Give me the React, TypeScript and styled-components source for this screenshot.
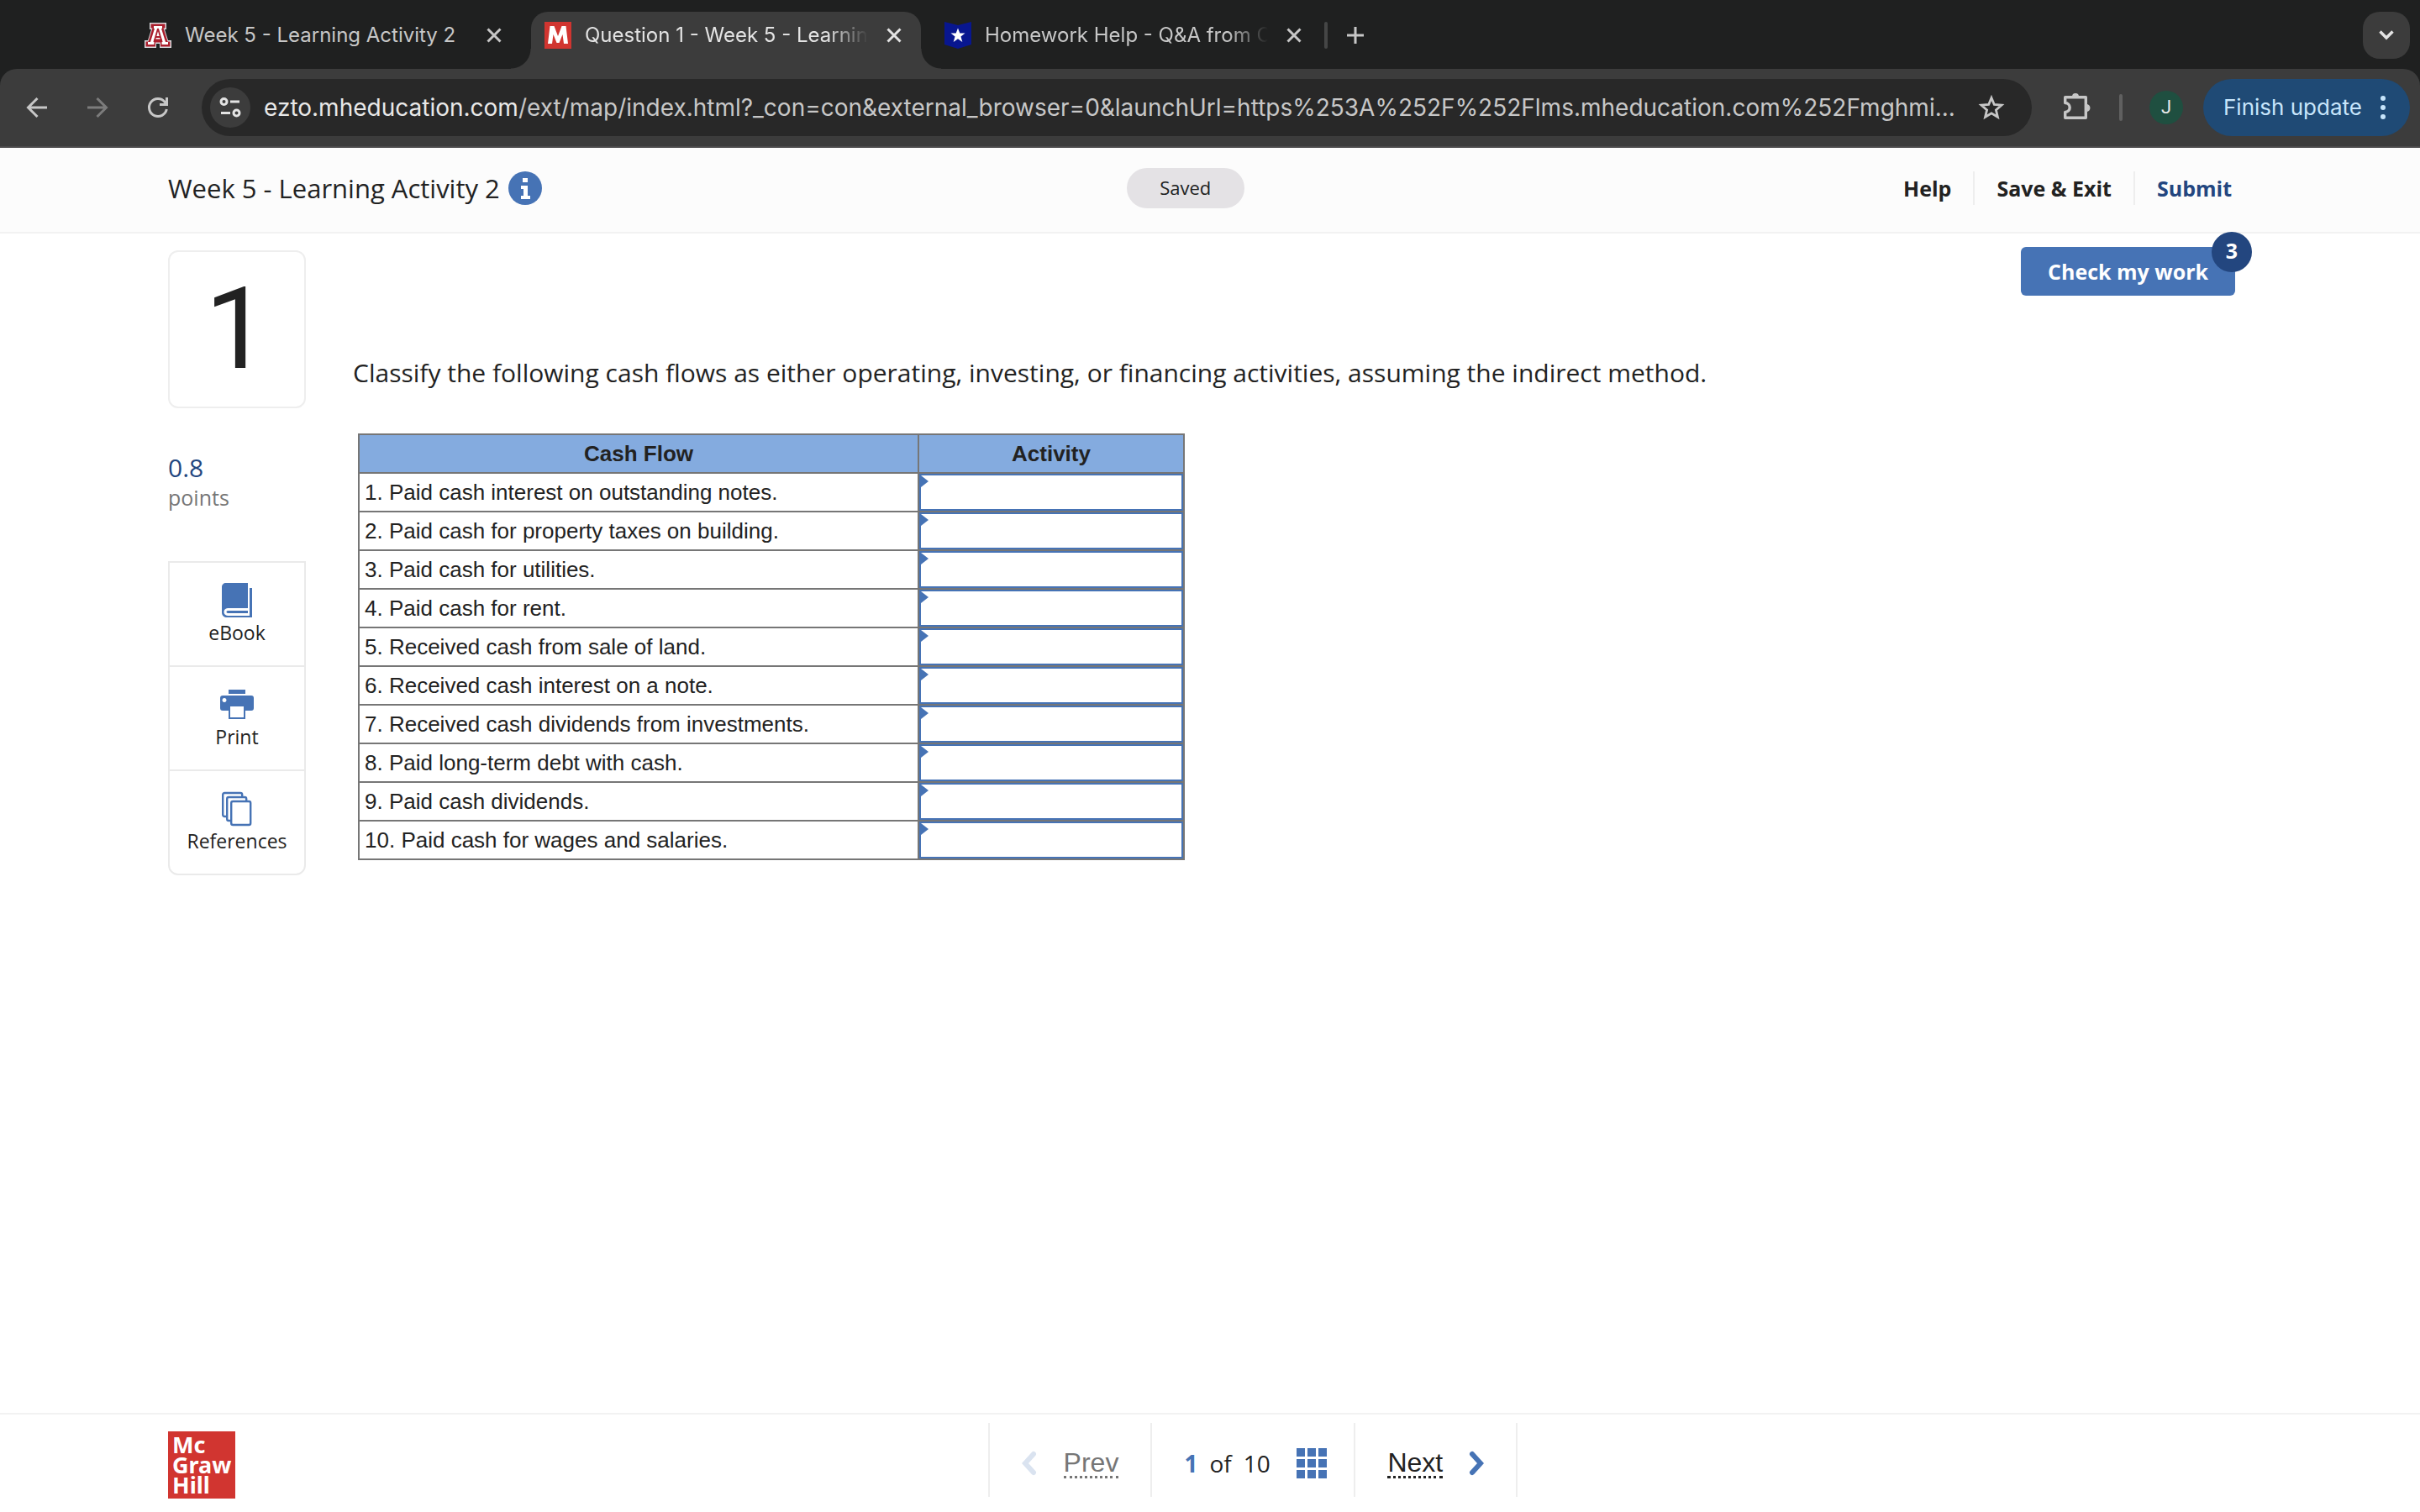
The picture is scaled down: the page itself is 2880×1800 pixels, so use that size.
import React from "react";
import styled, { createGlobalStyle, css } from "styled-components";

const ui = `Inter, "Noto Sans", sans-serif`;
const brand = `"Open Sans", "Noto Sans", sans-serif`;
const tableFont = `"Liberation Sans", Arial, sans-serif`;

const colors = {
  ink: "#222",
  muted: "#767676",
  line: "#eee",
  blue: "#4673b5",
  navy: "#23467f",
  strip: "#1f2020",
  bar: "#3c3c3c",
  icon: "#c7c7c7",
};

const GlobalStyle = createGlobalStyle`
  *, *::before, *::after { box-sizing: border-box; }
  body { margin: 0; background: #fff; color: ${colors.ink}; font-family: ${brand}; }
  button { border: 0; padding: 0; background: none; color: inherit; font: inherit; cursor: pointer; }
  svg { display: block; flex: none; }
`;

const Page = styled.div`
  display: flex;
  flex-direction: column;
  min-height: 100vh;
`;

/* Browser chrome */

const TabStrip = styled.div`
  display: flex;
  justify-content: space-between;
  height: 82px;
  padding: 14px 12px 0 156px;
  background: ${colors.strip};
  font: 24px/36px ${ui};
  color: ${colors.icon};
`;

const TabList = styled.div`
  display: flex;
`;

const Tab = styled.div<{ $active?: boolean }>`
  position: relative;
  display: flex;
  align-items: center;
  gap: 16px;
  width: 468px;
  height: 56px;
  padding: 0 27px 0 16px;
  ${(p) =>
    p.$active &&
    css`
      width: 464px;
      height: 68px;
      padding: 0 23px 12px 16px;
      margin: 0 12px 0 8px;
      border-radius: 20px 20px 0 0;
      background: ${colors.bar};
      color: #e3e3e3;
      &::before,
      &::after {
        content: "";
        position: absolute;
        bottom: 0;
        width: 24px;
        height: 24px;
      }
      &::before {
        right: 100%;
        background: radial-gradient(circle at 0 0, transparent 23px, ${colors.bar} 24px);
      }
      &::after {
        left: 100%;
        background: radial-gradient(circle at 100% 0, transparent 23px, ${colors.bar} 24px);
      }
    `}
`;

const TabTitle = styled.span<{ $fade?: boolean }>`
  flex: 1;
  min-width: 0;
  overflow: hidden;
  white-space: nowrap;
  ${(p) => p.$fade && css`mask-image: linear-gradient(to right, #000 calc(100% - 48px), transparent);`}
`;

const TabClose = styled.button`
  margin-left: 6px;
`;

const StripDivider = styled.span`
  width: 4px;
  height: 32px;
  margin: 12px 22px 0 0;
  border-radius: 2px;
  background: #454646;
`;

const NewTab = styled.button`
  height: 56px;
`;

const TabSearch = styled.button`
  display: grid;
  place-items: center;
  width: 56px;
  height: 56px;
  border-radius: 20px;
  background: ${colors.bar};
  color: #e3e3e3;
`;

const ToolbarBack = styled.div`
  background: ${colors.strip};
`;

const Toolbar = styled.div`
  display: flex;
  align-items: center;
  height: 94px;
  padding: 0 12px 0 28px;
  border-bottom: 2px solid #4b4a4b;
  border-radius: 20px 20px 0 0;
  background: ${colors.bar};
  color: ${colors.icon};
`;

const NavIcons = styled.div`
  display: flex;
  gap: 40px;
  margin-right: 36px;
`;

const NavIcon = styled.button<{ $dim?: boolean }>`
  color: ${(p) => (p.$dim ? "#7c7c7c" : colors.icon)};
`;

const Omnibox = styled.div`
  display: flex;
  flex: 1;
  align-items: center;
  min-width: 0;
  height: 68px;
  padding: 0 32px 0 10px;
  border-radius: 34px;
  background: #282828;
`;

const SiteInfo = styled.button`
  display: grid;
  flex: none;
  place-items: center;
  width: 48px;
  height: 48px;
  border-radius: 24px;
  background: ${colors.bar};
`;

const Url = styled.span`
  flex: 1;
  min-width: 0;
  margin: 0 12px 0 16px;
  overflow: hidden;
  white-space: nowrap;
  text-overflow: ellipsis;
  font: 28px/40px ${ui};
  color: ${colors.icon};
  strong {
    font-weight: 400;
    color: #e8e8e8;
  }
`;

const Extensions = styled.button`
  margin: 0 32px 0 36px;
`;

const BarDivider = styled.span`
  width: 4px;
  height: 32px;
  border-radius: 2px;
  background: #606060;
`;

const Avatar = styled.button`
  width: 40px;
  height: 40px;
  margin: 0 24px 0 32px;
  border-radius: 20px;
  background: #1f4f40;
  color: #e8e8e8;
  font: 22px/40px Roboto, sans-serif;
`;

const UpdateButton = styled.button`
  display: flex;
  align-items: center;
  justify-content: space-between;
  width: 246px;
  height: 68px;
  padding: 0 29px 0 24px;
  border-radius: 34px;
  background: #1f4a75;
  color: #c7e5fb;
  font: 26px/36px ${ui};
  white-space: nowrap;
`;

/* Assignment header */

const Header = styled.header`
  display: grid;
  grid-template-columns: 33fr auto 34fr;
  align-items: center;
  height: 102px;
  padding: 0 224px 4px 200px;
  border-bottom: 2px solid #f2f2f2;
  background: #fcfcfc;
`;

const TitleGroup = styled.div`
  display: flex;
  align-items: center;
  gap: 10px;
`;

const Title = styled.h1`
  margin: 0;
  font-size: 31px;
  font-weight: 400;
  line-height: 44px;
`;

const SavedPill = styled.span`
  width: 140px;
  height: 48px;
  border-radius: 24px;
  background: #e4e2e5;
  font-size: 22px;
  line-height: 46px;
  text-align: center;
`;

const Actions = styled.nav`
  display: flex;
  justify-content: flex-end;
`;

const Action = styled.button<{ $primary?: boolean }>`
  height: 40px;
  padding: 0 26px;
  border-left: 2px solid ${colors.line};
  color: ${(p) => (p.$primary ? colors.navy : colors.ink)};
  font-size: 25px;
  font-weight: 700;
  line-height: 36px;
  &:first-child {
    border-left: 0;
  }
  &:last-child {
    padding-right: 0;
  }
`;

/* Question body */

const Main = styled.main`
  display: flex;
  flex: 1;
  align-items: flex-start;
  gap: 56px;
  padding: 20px 220px 0 200px;
`;

const Sidebar = styled.aside`
  width: 164px;
`;

const QuestionNumber = styled.div`
  display: grid;
  place-items: center;
  height: 188px;
  border: 2px solid ${colors.line};
  border-radius: 12px;
  font: 400 136px/180px Roboto, sans-serif;
`;

const Points = styled.div`
  margin: 52px 0 60px;
  color: ${colors.muted};
  font-size: 25px;
  line-height: 32px;
  strong {
    display: block;
    color: ${colors.navy};
    font-size: 30px;
    font-weight: 400;
    line-height: 38px;
  }
`;

const Tools = styled.div`
  border: 2px solid #eaeaea;
  border-radius: 0 0 12px 12px;
`;

const Tool = styled.button`
  display: flex;
  flex-direction: column;
  align-items: center;
  width: 100%;
  height: 122px;
  padding-top: 24px;
  font-size: 23px;
  line-height: 34px;
  & + & {
    height: 124px;
    border-top: 2px solid #eaeaea;
  }
`;

const Question = styled.section`
  display: flex;
  flex: 1;
  flex-direction: column;
`;

const CheckWork = styled.button`
  position: relative;
  align-self: flex-end;
  height: 58px;
  margin-top: -4px;
  padding: 0 32px;
  border-radius: 6px;
  background: ${colors.blue};
  color: #fff;
  font-size: 25px;
  font-weight: 700;
  line-height: 54px;
`;

const Badge = styled.span`
  position: absolute;
  top: -18px;
  right: -20px;
  width: 48px;
  height: 48px;
  border-radius: 24px;
  background: ${colors.navy};
  line-height: 44px;
`;

const Prompt = styled.p`
  margin: 70px 0 50px;
  font-size: 30px;
  line-height: 44px;
`;

const FlowTable = styled.table`
  width: 984px;
  margin-left: 6px;
  border-collapse: collapse;
  table-layout: fixed;
  font: 26px/30px ${tableFont};
  th,
  td {
    height: 46px;
    padding: 0;
    border: 2px solid ${colors.muted};
  }
  th {
    background: #84abdf;
    font-weight: 700;
  }
  td:first-child {
    padding-left: 6px;
  }
`;

const AnswerCell = styled.td`
  position: relative;
  &::after {
    content: "";
    position: absolute;
    top: 2px;
    left: 2px;
    border: solid transparent;
    border-width: 7px 0 7px 9px;
    border-left-color: ${colors.blue};
    pointer-events: none;
  }
`;

const AnswerSelect = styled.select`
  display: block;
  width: 100%;
  height: 44px;
  border: 2px solid ${colors.blue};
  border-radius: 0;
  background: #fff;
  appearance: none;
  font: inherit;
`;

/* Footer */

const Footer = styled.footer`
  display: grid;
  grid-template-columns: 19fr auto 17fr;
  height: 118px;
  padding: 10px 200px 0;
  border-top: 2px solid #f2f2f2;
`;

const Logo = styled.div`
  width: 80px;
  height: 80px;
  margin-top: 10px;
  padding: 4px 0 0 5px;
  background: #d13530;
  color: #fff;
  font: 700 27px/24px "Noto Sans", sans-serif;
`;

const Pager = styled.nav`
  display: flex;
  height: 88px;
  border-right: 2px solid ${colors.line};
`;

const PagerPart = styled.div<{ $width: number }>`
  display: flex;
  align-items: center;
  justify-content: space-between;
  width: ${(p) => p.$width}px;
  padding: 8px 32px 0;
  border-left: 2px solid ${colors.line};
`;

const PagerLink = styled.a<{ $dim?: boolean }>`
  display: flex;
  flex: 1;
  align-items: center;
  justify-content: space-between;
  padding: 0 6px;
  color: ${(p) => (p.$dim ? colors.muted : colors.ink)};
  font: 32px/32px ${tableFont};
  text-decoration: none;
  span {
    border-bottom: 3px dotted;
  }
`;

const Position = styled.span`
  display: flex;
  gap: 14px;
  margin-left: 6px;
  font-size: 28px;
  line-height: 44px;
  strong {
    color: ${colors.blue};
  }
`;

const CloseIcon = () => (
  <svg width="18" height="18" viewBox="0 0 18 18" stroke="currentColor" strokeWidth="3">
    <path d="M1.5 1.5l15 15M16.5 1.5l-15 15" />
  </svg>
);

const ArizonaIcon = () => (
  <svg width="32" height="32" viewBox="0 0 32 32">
    <path d="M6 1h20v8h-2l4 13h4v9H18v-5h-4v5H0v-9h4L8 9H6z" fill="#d9dde0" />
    <path d="M7.500 2.500h17v5h-2l5 16h3v6H19v-5h-6v5H1.500v-6h3l5-16h-2z" fill="#ab1f2d" />
    <path d="M11 5h10v3h-1l5 16h3v3h-7.500v-3h1l-1-3.500h-9L10.500 24h1v3H4v-3h3l5-16h-1z" fill="#fff" />
    <path d="M16 8l-4.500 15.500M16 8l4.500 15.500M12.500 18h7" stroke="#ab1f2d" strokeWidth="1.800" fill="none" />
  </svg>
);

const McGrawIcon = () => (
  <svg width="32" height="32" viewBox="0 0 32 32">
    <path d="M0 0h32v32H0z" fill="#d13530" />
    <path d="M4 26L6.500 5h5L16 17l4.500-12h5L28 26h-5l-1.500-11L17.500 25h-3l-4-10L9 26z" fill="#fff" />
  </svg>
);

const StarFlagIcon = () => (
  <svg width="32" height="32" viewBox="0 0 32 32">
    <path d="M0 0l16 4L32 0v27l-16 5-16-5z" fill="#08168f" />
    <path d="M16 7.500l2.300 6h6.200l-5 4 1.800 6.500-5.300-3.800-5.300 3.800 1.800-6.500-5-4h6.200z" fill="#fff" />
  </svg>
);

const flows = [
  "Paid cash interest on outstanding notes.",
  "Paid cash for property taxes on building.",
  "Paid cash for utilities.",
  "Paid cash for rent.",
  "Received cash from sale of land.",
  "Received cash interest on a note.",
  "Received cash dividends from investments.",
  "Paid long-term debt with cash.",
  "Paid cash dividends.",
  "Paid cash for wages and salaries.",
];

const tabs = [
  { title: "Week 5 - Learning Activity 2", icon: <ArizonaIcon /> },
  { title: "Question 1 - Week 5 - Learning", icon: <McGrawIcon />, active: true, fade: true },
  { title: "Homework Help - Q&A from C", icon: <StarFlagIcon />, fade: true },
];

const BrowserChrome = () => (
  <div>
    <TabStrip>
      <TabList>
        {tabs.map((t) => (
          <Tab key={t.title} $active={t.active}>
            {t.icon}
            <TabTitle $fade={t.fade}>{t.title}</TabTitle>
            <TabClose aria-label="Close tab">
              <CloseIcon />
            </TabClose>
          </Tab>
        ))}
        <StripDivider />
        <NewTab aria-label="New tab">
          <svg width="22" height="22" viewBox="0 0 22 22" stroke="currentColor" strokeWidth="3">
            <path d="M11 1v20M1 11h20" />
          </svg>
        </NewTab>
      </TabList>
      <TabSearch aria-label="Search tabs">
        <svg width="18" height="12" viewBox="0 0 18 12" fill="none" stroke="currentColor" strokeWidth="3.500">
          <path d="M1.500 1.500L9 9l7.500-7.500" />
        </svg>
      </TabSearch>
    </TabStrip>
    <ToolbarBack>
      <Toolbar>
        <NavIcons>
          <NavIcon aria-label="Back">
            <svg width="32" height="32" viewBox="0 0 32 32" fill="none" stroke="currentColor" strokeWidth="3">
              <path d="M28 16H6M16.500 5L5.500 16l11 11" />
            </svg>
          </NavIcon>
          <NavIcon $dim aria-label="Forward">
            <svg width="32" height="32" viewBox="0 0 32 32" fill="none" stroke="currentColor" strokeWidth="3">
              <path d="M4 16h22M15.500 5l11 11-11 11" />
            </svg>
          </NavIcon>
          <NavIcon aria-label="Reload">
            <svg width="32" height="32" viewBox="0 0 32 32" fill="none" stroke="currentColor" strokeWidth="3">
              <path d="M26.300 18A10.500 10.500 0 1 1 24 9.200l2.500 3M26.500 4v8.500H18" />
            </svg>
          </NavIcon>
        </NavIcons>
        <Omnibox>
          <SiteInfo aria-label="Site information">
            <svg width="26" height="24" viewBox="0 0 26 24" fill="none" stroke="#e3e3e3" strokeWidth="3">
              <circle cx="5.500" cy="5" r="3.500" />
              <path d="M13 5h11M2 18.500h11" />
              <circle cx="20.500" cy="18.500" r="3.500" />
            </svg>
          </SiteInfo>
          <Url>
            <strong>ezto.mheducation.com</strong>
            /ext/map/index.html?_con=con&external_browser=0&launchUrl=https%253A%252F%252Flms.mheducation.com%252Fmghmi...
          </Url>
          <button aria-label="Bookmark">
            <svg width="32" height="32" viewBox="0 0 32 32" fill="none" stroke="currentColor" strokeWidth="2.800">
              <path d="M16 4.500l3.300 8 8.700.7-6.600 5.700 2 8.400L16 22.800l-7.400 4.500 2-8.400L4 13.200l8.700-.7z" />
            </svg>
          </button>
        </Omnibox>
        <Extensions aria-label="Extensions">
          <svg width="36" height="40" viewBox="0 0 36 40" fill="none" stroke="currentColor" strokeWidth="3.400">
            <path d="M3.700 7.700h24.600v24.600H3.700v-6.800a5.500 5.500 0 0 0 0-11z" strokeLinejoin="round" />
            <path d="M12 7a4 4 0 0 1 8 0zM29 16a4.500 4.500 0 0 1 0 9z" fill="currentColor" stroke="none" />
          </svg>
        </Extensions>
        <BarDivider />
        <Avatar aria-label="Profile">J</Avatar>
        <UpdateButton>
          Finish update
          <svg width="6" height="28" viewBox="0 0 6 28" fill="currentColor">
            <circle cx="3" cy="3" r="3" />
            <circle cx="3" cy="14" r="3" />
            <circle cx="3" cy="25" r="3" />
          </svg>
        </UpdateButton>
      </Toolbar>
    </ToolbarBack>
  </div>
);

const EbookIcon = () => (
  <svg width="36" height="42" viewBox="0 0 36 42" fill={colors.blue}>
    <path d="M5 0h26v30H7c-6 0-6 9 0 9h26V6h3v35H6c-3 0-6-2-6-6V5c0-3 2-5 5-5z" />
    <path d="M7 33h24v3H7c-2 0-2-3 0-3z" />
  </svg>
);

const PrintIcon = () => (
  <svg width="40" height="42" viewBox="0 0 40 42" fill={colors.blue}>
    <path d="M10 3h20v5H10z" />
    <path
      fillRule="evenodd"
      d="M3 10h34c2 0 3 1 3 3v12c0 2-1 3-3 3h-7v10H10V28H3c-2 0-3-1-3-3V13c0-2 1-3 3-3zm2 3a2.500 2.500 0 1 0 .01 0zM12 23v13h16V23z"
    />
  </svg>
);

const ReferencesIcon = () => (
  <svg width="36" height="42" viewBox="0 0 36 42" fill="#fff" stroke={colors.blue} strokeWidth="2.400">
    <rect x="1.200" y="2" width="23" height="28" rx="2" />
    <rect x="6.200" y="7" width="23" height="28" rx="2" />
    <rect x="11.200" y="12" width="23" height="28" rx="2" />
  </svg>
);

const GridIcon = () => (
  <svg width="36" height="36" viewBox="0 0 36 36" fill={colors.blue}>
    {[0, 13, 26].map((y) => [0, 13, 26].map((x) => <rect key={`${x}-${y}`} x={x} y={y} width="10" height="10" />))}
  </svg>
);

export default function App() {
  return (
    <Page>
      <GlobalStyle />
      <BrowserChrome />
      <Header>
        <TitleGroup>
          <Title>Week 5 - Learning Activity 2</Title>
          <button aria-label="Assignment information">
            <svg width="40" height="40" viewBox="0 0 40 40">
              <circle cx="20" cy="20" r="20" fill={colors.blue} />
              <path d="M17 8h6v5h-6zM15 17h8v12h3v4H15v-4h3v-8h-3z" fill="#fff" />
            </svg>
          </button>
        </TitleGroup>
        <SavedPill>Saved</SavedPill>
        <Actions>
          <Action>Help</Action>
          <Action>Save &amp; Exit</Action>
          <Action $primary>Submit</Action>
        </Actions>
      </Header>
      <Main>
        <Sidebar>
          <QuestionNumber>1</QuestionNumber>
          <Points>
            <strong>0.8</strong>
            points
          </Points>
          <Tools>
            <Tool>
              <EbookIcon />
              eBook
            </Tool>
            <Tool>
              <PrintIcon />
              Print
            </Tool>
            <Tool>
              <ReferencesIcon />
              References
            </Tool>
          </Tools>
        </Sidebar>
        <Question>
          <CheckWork>
            Check my work
            <Badge>3</Badge>
          </CheckWork>
          <Prompt>
            Classify the following cash flows as either operating, investing, or financing activities, assuming the
            indirect method.
          </Prompt>
          <FlowTable>
            <colgroup>
              <col />
              <col width="316" />
            </colgroup>
            <thead>
              <tr>
                <th>Cash Flow</th>
                <th>Activity</th>
              </tr>
            </thead>
            <tbody>
              {flows.map((flow, i) => (
                <tr key={flow}>
                  <td>
                    <label htmlFor={`flow-${i + 1}`}>
                      {i + 1}. {flow}
                    </label>
                  </td>
                  <AnswerCell>
                    <AnswerSelect id={`flow-${i + 1}`} defaultValue="">
                      <option value="" />
                    </AnswerSelect>
                  </AnswerCell>
                </tr>
              ))}
            </tbody>
          </FlowTable>
        </Question>
      </Main>
      <Footer>
        <Logo>
          Mc
          <br />
          Graw
          <br />
          Hill
        </Logo>
        <Pager>
          <PagerPart $width={193}>
            <PagerLink $dim href="#prev">
              <svg width="18" height="30" viewBox="0 0 18 30" fill="none" stroke="#dae3f0" strokeWidth="6" strokeLinecap="round">
                <path d="M14 4L4 15l10 11" />
              </svg>
              <span>Prev</span>
            </PagerLink>
          </PagerPart>
          <PagerPart $width={242}>
            <Position>
              <strong>1</strong>
              <span>of</span>
              <span>10</span>
            </Position>
            <button aria-label="All questions">
              <GridIcon />
            </button>
          </PagerPart>
          <PagerPart $width={193}>
            <PagerLink href="#next">
              <span>Next</span>
              <svg width="18" height="30" viewBox="0 0 18 30" fill="none" stroke={colors.blue} strokeWidth="6" strokeLinecap="round">
                <path d="M4 4l10 11L4 26" />
              </svg>
            </PagerLink>
          </PagerPart>
        </Pager>
      </Footer>
    </Page>
  );
}
